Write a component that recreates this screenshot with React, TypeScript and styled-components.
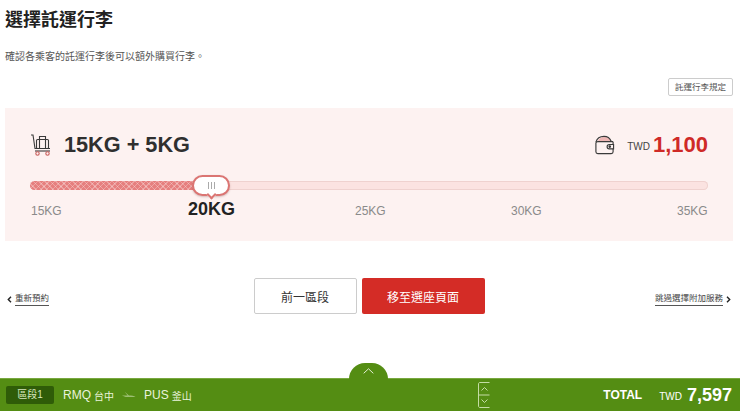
import React from "react";
import styled, { createGlobalStyle } from "styled-components";

const FONT = `"Liberation Sans", "Noto Sans CJK TC", sans-serif`;

const Global = createGlobalStyle`
  html, body { margin: 0; padding: 0; background: #fff; }
  body { font-family: ${FONT}; color: #333; }
`;

const Page = styled.div`
  width: 740px;
  height: 411px;
  display: flex;
  flex-direction: column;
  overflow: hidden;
`;
const Main = styled.main`
  height: 378px;
  padding: 0 7px 0 5px;
  box-sizing: border-box;
`;
const Title = styled.h1`
  margin: 0;
  padding-top: 8px;
  font-size: 18px;
  line-height: 24px;
  font-weight: 700;
  color: #222;
`;
const Intro = styled.p`
  margin: 15px 0 0;
  font-size: 10px;
  line-height: 20px;
  color: #555;
`;
const RuleRow = styled.div`
  display: flex;
  justify-content: flex-end;
  margin-top: 11px;
`;
const RuleButton = styled.button`
  width: 65px;
  height: 18px;
  padding: 0;
  border: 1px solid #ccc;
  border-radius: 2px;
  background: #fff;
  color: #555;
  font: 8.5px/16px ${FONT};
`;
const Panel = styled.section`
  height: 133px;
  margin-top: 12px;
  padding: 0 25px;
  box-sizing: border-box;
  background: #fdf2f1;
`;
const Summary = styled.div`
  height: 73px;
  display: flex;
  align-items: center;
  justify-content: space-between;
`;
const SummaryLeft = styled.div`
  display: flex;
  align-items: center;
  gap: 12px;
`;
const SummaryRight = styled.div`
  display: flex;
  align-items: center;
`;
const Weight = styled.div`
  font-size: 21.7px;
  line-height: 24px;
  margin-top: 1px;
  font-weight: 700;
  color: #2f2f2f;
`;
const Currency = styled.span`
  margin-left: 12px;
  font-size: 10px;
  color: #444;
  padding-top: 4px;
`;
const Price = styled.span`
  margin-left: 3px;
  font-size: 22px;
  font-weight: 700;
  color: #cf2a27;
`;
const Track = styled.div`
  position: relative;
  height: 9px;
  border-radius: 5px;
  background: #fbe3e1;
  box-shadow: inset 0 0 0 1px #efd2cf;
`;
const TrackFill = styled.div`
  height: 100%;
  border-radius: 5px 0 0 5px;
  background-color: #e67f7e;
  background-image:
    repeating-linear-gradient(45deg, rgba(255,255,255,.28) 0 1px, transparent 1px 4px),
    repeating-linear-gradient(-45deg, rgba(255,255,255,.28) 0 1px, transparent 1px 4px);
`;
const Handle = styled.div`
  position: absolute;
  top: -6px;
  transform: translateX(-50%);
  width: 38px;
  height: 21px;
  box-sizing: border-box;
  border: 2px solid #db7573;
  border-radius: 11px;
  background: #fff;
  display: flex;
  align-items: center;
  justify-content: center;
  gap: 2px;
  box-shadow: 0 1px 2px rgba(120, 60, 60, .3);
  &::after {
    content: "";
    position: absolute;
    left: 50%;
    bottom: -4px;
    width: 5px;
    height: 5px;
    margin-left: -3px;
    background: #fff;
    border-right: 2px solid #db7573;
    border-bottom: 2px solid #db7573;
    transform: rotate(45deg);
    z-index: -1;
  }
`;
const Grip = styled.i`
  width: 1px;
  height: 7px;
  background: #aaa;
`;
const Ticks = styled.div`
  display: grid;
  grid-template-columns: 157px 167px 156px 166px auto;
  padding-left: 1px;
  margin-top: 11px;
  height: 22px;
  align-items: center;
`;
const Tick = styled.span<{ $active?: boolean }>`
  font-size: ${(p) => (p.$active ? "18px" : "12px")};
  font-weight: ${(p) => (p.$active ? 700 : 400)};
  color: ${(p) => (p.$active ? "#222" : "#8a8a8a")};
  margin-top: ${(p) => (p.$active ? "-6px" : "-2px")};
`;
const Nav = styled.nav`
  height: 36px;
  margin-top: 37px;
  display: grid;
  grid-template-columns: 1fr auto 1fr;
  align-items: center;
`;
const TextLink = styled.a<{ $right?: boolean }>`
  display: flex;
  align-items: center;
  justify-content: ${(p) => (p.$right ? "flex-end" : "flex-start")};
  gap: 3px;
  margin: 6px ${(p) => (p.$right ? "2px" : "0")} 0 ${(p) => (p.$right ? "0" : "2px")};
  font-size: 8.5px;
  line-height: 11px;
  color: #444;
`;
const LinkText = styled.span`
  border-bottom: 1px solid #555;
  padding-bottom: 1px;
`;
const Arrow = styled.svg`
  width: 5px;
  height: 7px;
  flex: none;
`;
const NavButtons = styled.div`
  display: flex;
  gap: 5px;
`;
const GhostButton = styled.button`
  width: 103px;
  height: 36px;
  border: 1px solid #ccc;
  border-radius: 2px;
  background: #fff;
  color: #333;
  font: 12px ${FONT};
`;
const PrimaryButton = styled.button`
  width: 123px;
  height: 36px;
  border: 0;
  border-radius: 2px;
  background: #d42c26;
  color: #fff;
  font: 12px ${FONT};
`;
const Footer = styled.footer`
  position: relative;
  height: 33px;
  display: flex;
  align-items: center;
  padding: 0 8px 0 6px;
  background: #548d13;
  color: #fff;
  border-top: 1px solid #78a83f;
  box-sizing: border-box;
`;
const Bump = styled.div`
  position: absolute;
  left: 349px;
  top: -16px;
  width: 39px;
  height: 16px;
  border-radius: 20px 20px 0 0;
  background: #548d13;
  display: flex;
  align-items: center;
  justify-content: center;
`;
const Segment = styled.div`
  width: 48px;
  height: 18px;
  border-radius: 2px;
  background: #2f5c08;
  color: #d5e6bd;
  font-size: 10px;
  line-height: 18px;
  text-align: center;
`;
const Route = styled.div`
  display: flex;
  align-items: center;
  margin-left: 9px;
  width: 415px;
  color: #eaf3dc;
`;
const Code = styled.span`
  font-size: 12px;
`;
const City = styled.span`
  margin-left: 3px;
  font-size: 10px;
`;
const Plane = styled.svg`
  width: 15px;
  height: 8px;
  margin: 0 8px 0 7px;
`;
const Stepper = styled.svg`
  width: 12px;
  height: 26px;
  flex: none;
`;
const Total = styled.div`
  margin-left: auto;
  display: flex;
  align-items: center;
`;
const TotalLabel = styled.span`
  font-size: 12px;
  font-weight: 700;
`;
const TotalCurrency = styled.span`
  margin-left: 17px;
  font-size: 10px;
  padding-top: 2px;
`;
const TotalPrice = styled.span`
  margin-left: 5px;
  font-size: 18px;
  font-weight: 700;
`;

const LuggageIcon = () => (
  <svg width="22" height="22" viewBox="0 0 22 22" fill="none" stroke="#3a3a3a" strokeWidth="1.1">
    <path d="M1 1h2l2 13.5h15" />
    <rect x="6.5" y="5.5" width="12" height="9" rx="1" />
    <path d="M9.5 5.5V2.5h6v3M9.5 5.5v9M15.5 5.5v9" />
    <path d="M5 17h15" />
    <circle cx="7.5" cy="19.5" r="1.7" stroke="#c9605e" />
    <circle cx="17.5" cy="19.5" r="1.7" stroke="#c9605e" />
  </svg>
);

const WalletIcon = () => (
  <svg width="21" height="22" viewBox="0 0 22 22" fill="none" stroke="#3a3a3a" strokeWidth="1.2">
    <path d="M4 7c1-3 3.5-4.5 7-4.5S17 4 18 7z" fill="#eeb6b4" stroke="none" />
    <path d="M2 8c1-3.5 4-6 8.5-6 3.5 0 6 1.5 7.5 5" />
    <path d="M20 7.5H4C2.8 7.5 2 8 2 9v9c0 1.2.8 2 2 2h14c1.2 0 2-.8 2-2v-3" />
    <path d="M20 7.5V10M20.5 10.5H16a2 2 0 0 0 0 4.5h4.500z" />
    <circle cx="16.5" cy="12.7" r=".8" fill="#3a3a3a" />
  </svg>
);

export default function App() {
  return (
    <Page>
      <Global />
      <Main>
        <Title>選擇託運行李</Title>
        <Intro>確認各乘客的託運行李後可以額外購買行李。</Intro>
        <RuleRow>
          <RuleButton>託運行李規定</RuleButton>
        </RuleRow>
        <Panel>
          <Summary>
            <SummaryLeft>
              <LuggageIcon />
              <Weight>15KG + 5KG</Weight>
            </SummaryLeft>
            <SummaryRight>
              <WalletIcon />
              <Currency>TWD</Currency>
              <Price>1,100</Price>
            </SummaryRight>
          </Summary>
          <Track>
            <TrackFill style={{ width: "26.7%" }} />
            <Handle style={{ left: "26.7%" }}>
              <Grip />
              <Grip />
              <Grip />
            </Handle>
          </Track>
          <Ticks>
            <Tick>15KG</Tick>
            <Tick $active>20KG</Tick>
            <Tick>25KG</Tick>
            <Tick>30KG</Tick>
            <Tick>35KG</Tick>
          </Ticks>
        </Panel>
        <Nav>
          <TextLink>
            <Arrow viewBox="0 0 5 7">
              <path d="M4 .8 1.3 3.5 4 6.2" fill="none" stroke="#222" strokeWidth="1.4" />
            </Arrow>
            <LinkText>重新預約</LinkText>
          </TextLink>
          <NavButtons>
            <GhostButton>前一區段</GhostButton>
            <PrimaryButton>移至選座頁面</PrimaryButton>
          </NavButtons>
          <TextLink $right>
            <LinkText>跳過選擇附加服務</LinkText>
            <Arrow viewBox="0 0 5 7">
              <path d="M1 .8 3.7 3.5 1 6.2" fill="none" stroke="#222" strokeWidth="1.4" />
            </Arrow>
          </TextLink>
        </Nav>
      </Main>
      <Footer>
        <Bump>
          <svg width="11" height="6" viewBox="0 0 11 6" fill="none" stroke="#e4efd4" strokeWidth="1">
            <path d="M.7 5.3 5.5.8l4.8 4.5" />
          </svg>
        </Bump>
        <Segment>區段1</Segment>
        <Route>
          <Code>RMQ</Code>
          <City>台中</City>
          <Plane viewBox="0 0 16 8">
            <path d="M4 .5 7 4.500H1l4 1.500h10.500C14 4.800 11 4.600 8.500 4.500z" fill="#9dbf73" />
          </Plane>
          <Code>PUS</Code>
          <City>釜山</City>
        </Route>
        <Stepper viewBox="0 0 12 26" fill="none" stroke="#c4dca5" strokeWidth="1">
          <path d="M11.5.5H2C1 .5.500 1 .500 2v22c0 1 .5 1.500 1.500 1.500h9.500M.5 13h11" />
          <path d="M3.500 8.500 6.500 5.500l3 3M3.500 17.500l3 3 3-3" />
        </Stepper>
        <Total>
          <TotalLabel>TOTAL</TotalLabel>
          <TotalCurrency>TWD</TotalCurrency>
          <TotalPrice>7,597</TotalPrice>
        </Total>
      </Footer>
    </Page>
  );
}
